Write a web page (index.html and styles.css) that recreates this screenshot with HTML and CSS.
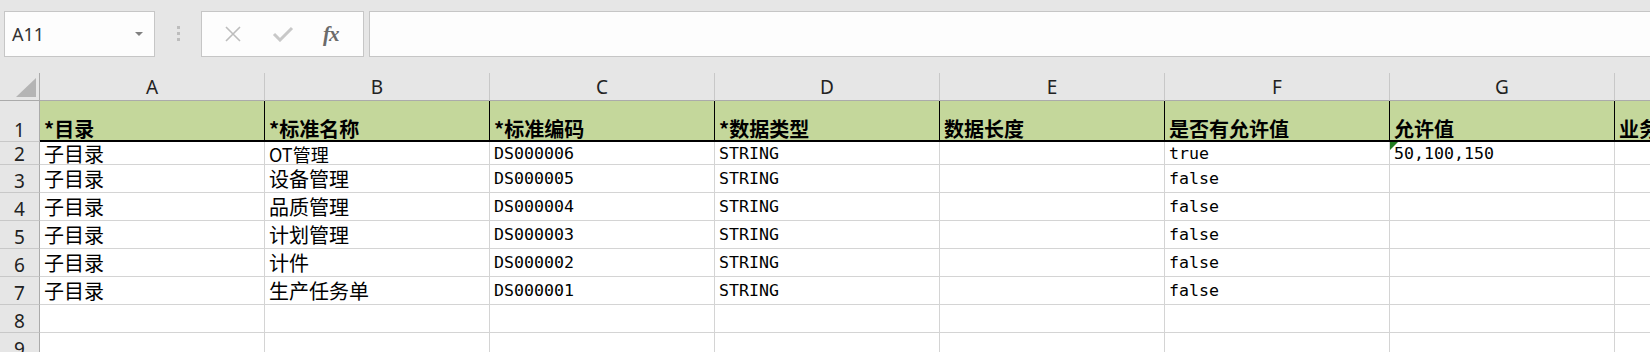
FILE: index.html
```html
<!DOCTYPE html>
<html lang="zh-CN">
<head>
  <meta charset="UTF-8" />
  <title>数据标准 - 工作表</title>
  <link rel="stylesheet" href="styles.css">
</head>
<body>
  <div class="toolbar">
    <div class="name-box">
      <span>A11</span>
      <span class="caret"></span>
    </div>
    <div class="grip">
      <i></i><i></i><i></i>
    </div>
    <div class="func-box">
      <svg class="icon" width="20" height="16" viewBox="0 0 20 16">
        <path d="M3 1 L17 15 M17 1 L3 15" stroke="#bdbdbd" stroke-width="1.6" fill="none" />
      </svg>
      <svg class="icon" width="22" height="16" viewBox="0 0 22 16">
        <path d="M2 8 L8 14 L20 2" stroke="#c8c8c8" stroke-width="3" fill="none" />
      </svg>
      <span class="fx">fx</span>
    </div>
    <div class="formula"></div>
  </div>

  <div class="sheet">
    <div class="row col-head">
      <div class="cell corner"><span class="tri"></span></div>
      <div class="cell">A</div>
      <div class="cell">B</div>
      <div class="cell">C</div>
      <div class="cell">D</div>
      <div class="cell">E</div>
      <div class="cell">F</div>
      <div class="cell">G</div>
      <div class="cell">H</div>
    </div>

    <div class="row title-row">
      <div class="cell num">1</div>
      <div class="cell">*目录</div>
      <div class="cell">*标准名称</div>
      <div class="cell">*标准编码</div>
      <div class="cell">*数据类型</div>
      <div class="cell">数据长度</div>
      <div class="cell">是否有允许值</div>
      <div class="cell">允许值</div>
      <div class="cell">业务</div>
    </div>

    <div class="row short">
      <div class="cell num">2</div>
      <div class="cell cn">子目录</div>
      <div class="cell cn small">OT管理</div>
      <div class="cell mono">DS000006</div>
      <div class="cell mono">STRING</div>
      <div class="cell"></div>
      <div class="cell mono">true</div>
      <div class="cell mono flagged">50,100,150</div>
      <div class="cell"></div>
    </div>

    <div class="row">
      <div class="cell num">3</div>
      <div class="cell cn">子目录</div>
      <div class="cell cn">设备管理</div>
      <div class="cell mono">DS000005</div>
      <div class="cell mono">STRING</div>
      <div class="cell"></div>
      <div class="cell mono">false</div>
      <div class="cell"></div>
      <div class="cell"></div>
    </div>

    <div class="row">
      <div class="cell num">4</div>
      <div class="cell cn">子目录</div>
      <div class="cell cn">品质管理</div>
      <div class="cell mono">DS000004</div>
      <div class="cell mono">STRING</div>
      <div class="cell"></div>
      <div class="cell mono">false</div>
      <div class="cell"></div>
      <div class="cell"></div>
    </div>

    <div class="row">
      <div class="cell num">5</div>
      <div class="cell cn">子目录</div>
      <div class="cell cn">计划管理</div>
      <div class="cell mono">DS000003</div>
      <div class="cell mono">STRING</div>
      <div class="cell"></div>
      <div class="cell mono">false</div>
      <div class="cell"></div>
      <div class="cell"></div>
    </div>

    <div class="row">
      <div class="cell num">6</div>
      <div class="cell cn">子目录</div>
      <div class="cell cn">计件</div>
      <div class="cell mono">DS000002</div>
      <div class="cell mono">STRING</div>
      <div class="cell"></div>
      <div class="cell mono">false</div>
      <div class="cell"></div>
      <div class="cell"></div>
    </div>

    <div class="row">
      <div class="cell num">7</div>
      <div class="cell cn">子目录</div>
      <div class="cell cn">生产任务单</div>
      <div class="cell mono">DS000001</div>
      <div class="cell mono">STRING</div>
      <div class="cell"></div>
      <div class="cell mono">false</div>
      <div class="cell"></div>
      <div class="cell"></div>
    </div>

    <div class="row">
      <div class="cell num">8</div>
      <div class="cell"></div><div class="cell"></div><div class="cell"></div><div class="cell"></div>
      <div class="cell"></div><div class="cell"></div><div class="cell"></div><div class="cell"></div>
    </div>

    <div class="row">
      <div class="cell num">9</div>
      <div class="cell"></div><div class="cell"></div><div class="cell"></div><div class="cell"></div>
      <div class="cell"></div><div class="cell"></div><div class="cell"></div><div class="cell"></div>
    </div>
  </div>
</body>
</html>
```

FILE: styles.css
```css
body {
  margin: 0;
  background: #ffffff;
  font-family: 'Noto Sans', 'Noto Sans CJK SC', sans-serif;
  overflow: hidden;
  width: 1650px;
  height: 352px;
}

/* formula bar */
.toolbar {
  display: flex;
  align-items: flex-start;
  height: 73px;
  padding: 11px 0 0 4px;
  box-sizing: border-box;
  background: #e6e6e6;
}

.name-box {
  display: flex;
  align-items: center;
  justify-content: space-between;
  width: 151px;
  height: 46px;
  padding: 0 11px 0 7px;
  box-sizing: border-box;
  background: #fdfdfd;
  border: 1px solid #c6c6c6;
  font-size: 18px;
  color: #333333;
}

.caret {
  width: 0;
  height: 0;
  border-left: 4px solid transparent;
  border-right: 4px solid transparent;
  border-top: 4px solid #808080;
}

.grip {
  display: flex;
  flex-direction: column;
  align-items: center;
  gap: 3px;
  width: 46px;
  padding-top: 15px;
}

.grip i {
  width: 3px;
  height: 3px;
  background: #bdbdbd;
}

.func-box {
  display: flex;
  align-items: center;
  justify-content: space-around;
  width: 163px;
  height: 46px;
  padding: 0 10px 0 6px;
  box-sizing: border-box;
  background: #fdfdfd;
  border: 1px solid #c6c6c6;
}

.fx {
  font-family: 'Liberation Serif', serif;
  font-style: italic;
  font-weight: bold;
  font-size: 21px;
  color: #6b6b6b;
  letter-spacing: -1px;
}

.formula {
  flex: 1;
  height: 46px;
  margin-left: 5px;
  box-sizing: border-box;
  background: #fdfdfd;
  border-top: 1px solid #c6c6c6;
  border-bottom: 1px solid #c6c6c6;
  border-left: 1px solid #c6c6c6;
}

/* grid */
.sheet {
  overflow: hidden;
}

.row {
  display: grid;
  grid-template-columns: 40px repeat(8, 225px);
  height: 28px;
}

.cell {
  display: flex;
  align-items: flex-end;
  padding: 0 4px 2px;
  box-sizing: border-box;
  border-right: 1px solid #d4d4d4;
  border-bottom: 1px solid #d4d4d4;
  white-space: nowrap;
  overflow: hidden;
  font-size: 20px;
  line-height: 22px;
  color: #000000;
}

.col-head .cell {
  justify-content: center;
  align-items: center;
  padding: 0;
  background: #e6e6e6;
  border-right-color: #c8c8c8;
  border-bottom-color: #ababab;
  font-size: 19px;
  color: #222222;
}

.col-head .corner {
  position: relative;
  border-right-color: #ababab;
}

.tri {
  position: absolute;
  right: 3px;
  bottom: 3px;
  width: 0;
  height: 0;
  border-left: 20px solid transparent;
  border-bottom: 19px solid #b4b4b4;
}

.num {
  justify-content: center;
  padding: 0 0 1px;
  background: #e6e6e6;
  border-right-color: #ababab;
  border-bottom-color: #c8c8c8;
  font-family: 'Noto Sans', sans-serif;
  font-size: 19px;
  line-height: 20px;
  color: #222222;
}

.title-row {
  height: 41px;
}

.title-row .cell {
  background: #c4d79b;
  border-right-color: #000000;
  border-bottom: 2px solid #000000;
  font-family: 'Noto Sans CJK SC', sans-serif;
  font-weight: bold;
  font-size: 20px;
  padding-bottom: 0;
}

.title-row .num {
  background: #e6e6e6;
  border-right-color: #ababab;
  border-bottom: 1px solid #c8c8c8;
  font-family: 'Noto Sans', sans-serif;
  font-weight: normal;
  font-size: 19px;
  padding-bottom: 1px;
}

.short {
  height: 23px;
}

.cn {
  font-family: 'Noto Sans CJK SC', sans-serif;
}

.small {
  font-size: 18px;
}

.short .cell {
  line-height: 20px;
  padding-bottom: 0;
}

.short .num {
  line-height: 20px;
}

.mono {
  font-family: 'DejaVu Sans Mono', monospace;
  font-size: 16.6px;
}

.flagged {
  position: relative;
}

.flagged::before {
  content: "";
  position: absolute;
  left: 0;
  top: 0;
  border-top: 8px solid #217a21;
  border-right: 8px solid transparent;
}
```
